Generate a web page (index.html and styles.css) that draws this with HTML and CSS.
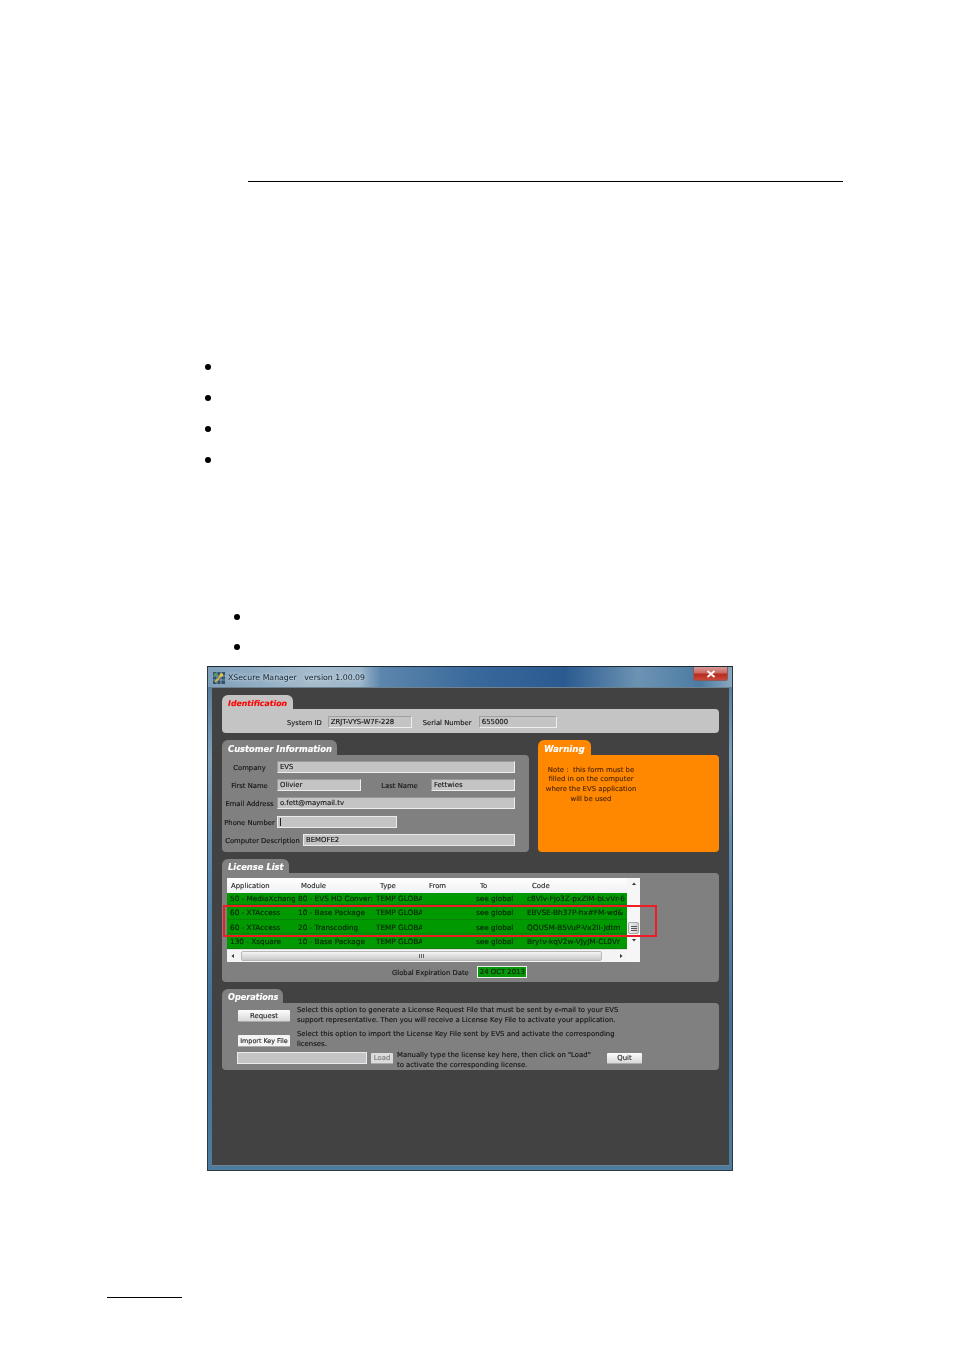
FILE: index.html
```html
<!DOCTYPE html>
<html lang="en">
<head>
<meta charset="utf-8">
<title>XSecure Manager</title>
<link rel="stylesheet" href="styles.css">
</head>
<body>
<div class="page">
  <div class="top-rule"></div>
  <div class="bullets bullets-a"><i></i><i></i><i></i><i></i></div>
  <div class="bullets bullets-b"><i></i><i></i></div>

  <div class="window">
    <div class="titlebar">
      <svg class="app-icon" viewBox="0 0 12 12" aria-hidden="true">
        <rect width="12" height="12" fill="#35506a"/>
        <path d="M0 4h12M0 8h12M4 0v12M8 0v12" stroke="#8fb0c8" stroke-width=".8"/>
        <path d="M2 10l4-4 2-4" stroke="#e0c040" stroke-width="1.6" fill="none"/>
        <circle cx="8.5" cy="3" r="1.7" fill="#e8c840"/>
        <rect x="1" y="1" width="3" height="3" fill="#4f9a58"/>
      </svg>
      <span class="title">XSecure Manager&nbsp;&nbsp;&nbsp;version 1.00.09</span>
      <div class="close">
        <svg viewBox="0 0 10 8" aria-hidden="true"><path d="M1.5 1l7 6M8.500 1l-7 6" stroke="#fff" stroke-width="1.7"/></svg>
      </div>
    </div>

    <div class="client">
      <section class="panel">
        <div class="tab tab-light tab-red">Identification</div>
        <div class="body body-light id-row">
          <span class="lbl">System ID</span>
          <div class="field field-id w84">ZRJT-VYS-W7F-228</div>
          <span class="lbl lbl-serial">Serial Number</span>
          <div class="field field-id field-serial w78">655000</div>
        </div>
      </section>

      <div class="pair">
        <section class="panel customer">
          <div class="tab tab-customer">Customer Information</div>
          <div class="body form">
            <div class="row"><span class="rlbl">Company</span><div class="field w238">EVS</div></div>
            <div class="row"><span class="rlbl">First Name</span><div class="field w84">Olivier</div><span class="rlbl rlbl-last">Last Name</span><div class="field w84">Fettwies</div></div>
            <div class="row"><span class="rlbl">Email Address</span><div class="field w238">o.fett@maymail.tv</div></div>
            <div class="row row-phone"><span class="rlbl">Phone Number</span><div class="field field-focus w120"><b class="caret"></b></div></div>
            <div class="row"><span class="rlbl rlbl-wide">Computer Description</span><div class="field field-white w212">BEMOFE2</div></div>
          </div>
        </section>
        <section class="panel warning">
          <div class="tab tab-orange">Warning</div>
          <div class="body body-orange">Note :&nbsp; this form must be<br>filled in on the computer<br>where the EVS application<br>will be used</div>
        </section>
      </div>

      <section class="panel">
        <div class="tab tab-short">License List</div>
        <div class="body license">
          <div class="table">
            <div class="tmain">
              <div class="thead">
                <span class="c1">Application</span><span class="c2">Module</span><span class="c3">Type</span><span class="c4">From</span><span class="c5">To</span><span class="c6">Code</span>
              </div>
              <div class="trow trow-first"><span class="d1">50 - MediaXchang</span><span class="d2">80 - EVS HD Conver:</span><span class="d3">TEMP GLOBA</span><span class="d4"></span><span class="d5">see global</span><span class="d6">c8Vlv-Fjo3Z-pxZlM-bLvVr-6</span></div>
              <div class="trow"><span class="d1">60 - XTAccess</span><span class="d2">10 - Base Package</span><span class="d3">TEMP GLOBA</span><span class="d4"></span><span class="d5">see global</span><span class="d6">EBVSE-Bh37P-hx#FM-wd&amp;</span></div>
              <div class="trow"><span class="d1">60 - XTAccess</span><span class="d2">20 - Transcoding</span><span class="d3">TEMP GLOBA</span><span class="d4"></span><span class="d5">see global</span><span class="d6">QQUSM-B5VuP-Vx2II-Jdtm</span></div>
              <div class="trow"><span class="d1">130 - Xsquare</span><span class="d2">10 - Base Package</span><span class="d3">TEMP GLOBA</span><span class="d4"></span><span class="d5">see global</span><span class="d6">Bry!v-kqV2w-VJyJM-CL0Vr</span></div>
              <div class="hscroll">
                <svg class="arrow" viewBox="0 0 6 6" aria-hidden="true"><path d="M4 1v4L1.500 3z" fill="#333"/></svg>
                <div class="hthumb"><span class="grip-h"></span></div>
                <svg class="arrow" viewBox="0 0 6 6" aria-hidden="true"><path d="M2 1v4l2.500-2z" fill="#333"/></svg>
              </div>
            </div>
            <div class="vscroll">
              <svg class="arrow" viewBox="0 0 6 6" aria-hidden="true"><path d="M1 4h4L3 1.500z" fill="#333"/></svg>
              <div class="vthumb"><span class="grip-v"></span></div>
              <svg class="arrow" viewBox="0 0 6 6" aria-hidden="true"><path d="M1 2h4L3 4.500z" fill="#333"/></svg>
            </div>
          </div>
          <div class="expiry">
            <span class="lbl">Global Expiration Date</span>
            <div class="date">24 OCT 2013</div>
          </div>
          <div class="highlight"></div>
        </div>
      </section>

      <section class="panel">
        <div class="tab tab-short tab-ops">Operations</div>
        <div class="body ops">
          <div class="op op-1">
            <div class="btn btn-op">Request</div>
            <p>Select this option to generate a License Request File that must be sent by e-mail to your EVS<br>support representative. Then you will receive a License Key File to activate your application.</p>
          </div>
          <div class="op op-2">
            <div class="btn btn-op btn-import">Import Key File</div>
            <p>Select this option to import the License Key File sent by EVS and activate the corresponding<br>licenses.</p>
          </div>
          <div class="op op-3">
            <div class="field field-white w130"></div>
            <div class="btn btn-load">Load</div>
            <p class="op3-text">Manually type the license key here, then click on "Load"<br>to activate the corresponding license.</p>
            <div class="btn btn-quit">Quit</div>
          </div>
        </div>
      </section>
    </div>
  </div>

  <div class="foot-rule"></div>
</div>
</body>
</html>
```
FILE: styles.css
```css
* { box-sizing: border-box; }
html, body { margin: 0; padding: 0; background: #fff; }
.page { width: 954px; height: 1349px; overflow: hidden; font-family: "DejaVu Sans", sans-serif; }

.top-rule { height: 1px; width: 595px; margin: 181px 0 0 248px; background: #000; }
.foot-rule { height: 1px; width: 75px; margin: 126px 0 0 107px; background: #000; }

.bullets { display: flex; flex-direction: column; }
.bullets i { display: block; width: 6px; height: 6px; border-radius: 50%; background: #000; }
.bullets-a { margin: 182px 0 0 205px; gap: 25px; }
.bullets-b { margin: 151px 0 0 234px; gap: 24px; }

.window {
  width: 526px; height: 505px; margin: 16px 0 0 207px;
  padding: 0 3px 4px 4px;
  display: flex; flex-direction: column;
  border: 1px solid #2c3a44; border-top-color: #1d2a36;
  background: linear-gradient(180deg, #4f7597 0%, #7ea2bd 18%, #5d8bb0 35%, #3f6f9a 70%, #4d7d9e 100%);
  filter: blur(.35px);
}
.titlebar {
  height: 20px; margin: 0 -3px 0 -4px; padding: 0 3px 0 5px;
  display: flex; align-items: center; position: relative;
  background: linear-gradient(90deg, #7f9fba 0%, #a6bccd 20%, #9db6ca 29%, #5d86ad 33%, #3a6a9c 50%, #2a5a90 68%, #6d93b3 82%, #4c7ba3 94%, #8aa8bd 100%);
}
.app-icon { width: 12px; height: 12px; flex: none; margin-top: 1px; }
.title {
  margin-left: 3px; font-size: 7.800px; color: #10202c; white-space: nowrap;
  text-shadow: 0 0 3px #cfdde8, 0 0 5px #cfdde8;
}
.close {
  position: absolute; right: 4px; top: 0; width: 35px; height: 14px;
  display: flex; align-items: center; justify-content: center;
  border: 1px solid #8c5a5a; border-top: 0; border-radius: 0 0 3px 3px;
  background: linear-gradient(180deg, #d79b96 0%, #c86a62 45%, #b82c20 55%, #c8483a 100%);
}
.close svg { width: 10px; height: 8px; }

.client {
  flex: 1; padding: 7px 10px 0; background: #424242;
  border: 1px solid #6f8290; border-width: 1px 0 1px 0;
  display: flex; flex-direction: column; gap: 7px;
  -webkit-text-stroke: .12px currentColor;
}
.panel { display: flex; flex-direction: column; align-items: flex-start; }
.tab {
  height: 15px; padding: 1.500px 5px 0 6px; border-radius: 6px 6px 0 0;
  font: italic bold 8.400px/14px "DejaVu Sans", sans-serif; color: #fff; white-space: nowrap;
  background: #808080;
}
.tab-light { background: #c4c4c4; height: 14px; line-height: 14px; font-size: 7.800px; padding-right: 6px; }
.tab-red { color: #ff0000; }
.tab-orange { background: #ff8800; font-size: 8.700px; padding-right: 6px; }
.tab-short { height: 14px; padding-top: .500px; }
.tab-ops { font-size: 8.100px; }
.body { width: 100%; background: #808080; border-radius: 0 4px 4px 4px; }
.body-light { background: #c4c4c4; }

.lbl, .rlbl { font-size: 6.800px; color: #111; white-space: nowrap; padding-top: 1px; }

.id-row { height: 24px; display: flex; align-items: center; padding: 2px 0 0 65px; gap: 6px; }
.lbl-serial { margin-left: 5px; width: 50px; }
.id-row .field-serial { margin-left: 0; }

.field {
  height: 12px; flex: none; padding-left: 2px;
  font-size: 6.900px; line-height: 11px; color: #111; white-space: nowrap;
  background: #c4c4c4;
  border: 1px solid; border-color: #9a9a9a #eeeeee #eeeeee #9a9a9a;
}
.field-id { border-color: #a0a0a0 #eeeeee #eeeeee #a0a0a0; }
.field-white, .field-focus { border-color: #e8ecf0; }
.w84 { width: 84px; } .w78 { width: 78px; } .w238 { width: 238px; }
.w120 { width: 120px; } .w212 { width: 212px; } .w130 { width: 130px; }
.caret { display: block; width: 1px; height: 8px; margin-top: 1px; background: #222; }

.pair { display: flex; gap: 9px; }
.customer { width: 307px; }
.warning { width: 181px; }
.form { height: 97px; padding-top: 6px; display: flex; flex-direction: column; gap: 6px; }
.row { display: flex; align-items: center; height: 12px; }
.row-phone { margin-top: 1px; }
.rlbl { width: 55px; text-align: center; display: block; }
.rlbl-last { width: 70px; padding-left: 7px; }
.rlbl-wide { width: 81px; }
.body-orange {
  height: 97px; padding: 10.500px 75px 0 0; background: #ff8800;
  font-size: 6.900px; line-height: 9.700px; color: #4a2400; text-align: center; white-space: nowrap;
}

.license { height: 109px; padding: 5px 0 0 5px; position: relative; }
.table { width: 413px; height: 84px; display: flex; background: #fff; }
.tmain { width: 400px; display: flex; flex-direction: column; overflow: hidden; }
.thead { height: 15px; display: flex; align-items: center; padding-top: 1px; background: linear-gradient(180deg, #fff, #f0f1f3); font-size: 6.900px; color: #222; }
.thead span { display: block; flex: none; padding-left: 4px; }
.c1 { width: 70px; } .c2 { width: 79px; } .c3 { width: 49px; } .c4 { width: 51px; } .c5 { width: 52px; } .c6 { width: 99px; }
.trow { height: 14.500px; display: flex; align-items: center; padding-top: 1px; background: #009900; font-size: 7.300px; color: #0a1f08; white-space: nowrap; border-bottom: 1px solid #0a820a; }
.trow-first { height: 12.250px; padding: 0; }
.trow span { display: block; flex: none; overflow: hidden; padding-left: 3px; }
.d1 { width: 68px; } .d2 { width: 78px; } .d3 { width: 49px; } .d4 { width: 51px; } .d5 { width: 51px; } .d6 { width: 103px; }
.hscroll { flex: 1; display: flex; align-items: center; background: #f4f4f4; border-top: 1px solid #ddd; padding: 0 3px; }
.hthumb {
  width: 361px; height: 10px; margin: 0 auto 0 5px; border: 1px solid #b8b8b8; border-radius: 2px;
  background: linear-gradient(180deg, #f4f4f4, #c8c8c8);
  display: flex; align-items: center; justify-content: center;
}
.grip-h { width: 5px; height: 4px; background: repeating-linear-gradient(90deg, #666 0 1px, transparent 1px 2px); }
.arrow { width: 6px; height: 6px; flex: none; }
.vscroll { width: 13px; display: flex; flex-direction: column; align-items: center; padding-top: 3px; background: #f6f6f6; }
.vthumb {
  width: 11px; height: 12px; margin-top: 35px; border: 1px solid #a8a8a8; border-radius: 2px;
  background: linear-gradient(90deg, #f0f0f0, #cfcfcf);
  display: flex; align-items: center; justify-content: center;
}
.grip-v { width: 6px; height: 5px; background: repeating-linear-gradient(180deg, #555 0 1px, transparent 1px 2px); }
.vscroll .arrow:last-child { margin-top: 3px; }
.expiry { display: flex; align-items: center; gap: 8px; margin: 4px 0 0 165px; }
.date {
  width: 50px; height: 12px; background: #0a960a; border: 1px solid #e6f0e6;
  font-size: 6.900px; line-height: 10px; padding-left: 2px; color: #0a1f08; white-space: nowrap;
}
.highlight { position: absolute; left: 1px; top: 32px; width: 434px; height: 32px; border: 2.500px solid #ee1c25; }

.ops { height: 67px; padding-top: 2px; display: flex; flex-direction: column; }
.op { display: flex; }
.op p { margin: 0; font-size: 6.900px; line-height: 10px; color: #111; white-space: nowrap; }
.op-1 { height: 24px; padding-left: 16px; }
.op-2 { height: 23px; padding-left: 16px; }
.op-1 p, .op-2 p { margin-left: 7px; }
.op-3 { height: 18px; padding-left: 15px; align-items: flex-start; }
.btn {
  height: 12px; flex: none; text-align: center; font-size: 6.900px; line-height: 12px; color: #222; white-space: nowrap;
  background: linear-gradient(180deg, #fdfdfd, #d8d8d8);
  border-bottom: 1px solid #aaa; border-radius: 1px;
}
.btn-op { width: 52px; margin-top: 5px; }
.btn-import { font-size: 6.400px; margin-top: 6px; background: #f4f4f4; }
.btn-load { width: 22px; height: 11px; margin: 1px 0 0 4px; background: #dcdcdc; color: #777; line-height: 11px; }
.op .op3-text { margin: -2px 0 0 4px; width: 210px; }
.btn-quit { width: 35px; height: 11px; margin-top: 1px; line-height: 11px; }
```
